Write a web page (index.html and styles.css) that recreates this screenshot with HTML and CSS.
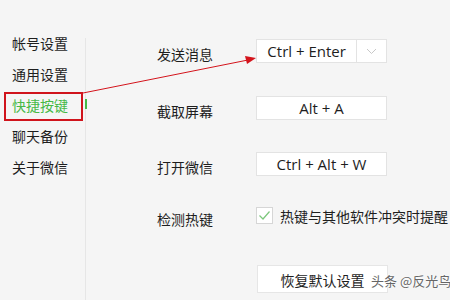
FILE: index.html
```html
<!DOCTYPE html>
<html lang="zh-CN">
<head>
<meta charset="utf-8">
<link rel="stylesheet" href="styles.css">
</head>
<body>
<div class="window">
  <nav class="sidebar">
    <div class="nav-item">帐号设置</div>
    <div class="nav-item">通用设置</div>
    <div class="nav-item active">快捷按键<span class="active-bar"></span></div>
    <div class="nav-item">聊天备份</div>
    <div class="nav-item">关于微信</div>
  </nav>
  <main class="content">
    <div class="row row-send">
      <div class="label">发送消息</div>
      <div class="keybox split">
        <span class="key-text">Ctrl + Enter</span>
        <span class="dropdown">
          <svg width="11" height="7" viewBox="0 0 11 7"><path d="M1 1 L5.5 5.5 L10 1" fill="none" stroke="#c8c8c8" stroke-width="1"/></svg>
        </span>
      </div>
    </div>
    <div class="row row-capture">
      <div class="label">截取屏幕</div>
      <div class="keybox"><span class="key-text">Alt + A</span></div>
    </div>
    <div class="row row-open">
      <div class="label">打开微信</div>
      <div class="keybox"><span class="key-text">Ctrl + Alt + W</span></div>
    </div>
    <div class="row row-check">
      <div class="label">检测热键</div>
      <label class="check">
        <span class="checkbox">
          <svg width="13" height="11" viewBox="0 0 13 11"><path d="M1.5 5.5 L5 9 L11.5 1.5" fill="none" stroke="#7cc77c" stroke-width="1.2"/></svg>
        </span>
        <span class="check-text">热键与其他软件冲突时提醒</span>
      </label>
    </div>
    <div class="row row-reset">
      <div class="label"></div>
      <button class="reset">恢复默认设置</button>
    </div>
  </main>
</div>
<div class="highlight-box"></div>
<svg class="arrow" width="450" height="300" viewBox="0 0 450 300">
  <line x1="83" y1="93" x2="248" y2="60" stroke="#d4141c" stroke-width="1"/>
  <polygon points="256,58 245,56 247,64" fill="#d4141c"/>
</svg>
<div class="watermark">头条 @反光鸟</div>
</body>
</html>
```
FILE: styles.css
```css
html, body {
  margin: 0;
  padding: 0;
}
body {
  width: 450px;
  height: 300px;
  background: #f5f5f5;
  font-family: "Noto Sans CJK SC", "Noto Sans", sans-serif;
  color: #1e1e1e;
  overflow: hidden;
  position: relative;
}
.window {
  display: flex;
  height: 300px;
}
.sidebar {
  width: 86px;
  padding-top: 28px;
  display: flex;
  flex-direction: column;
  position: relative;
}
.sidebar::after {
  content: "";
  position: absolute;
  right: 0;
  top: 38px;
  bottom: 0;
  width: 1px;
  background: #e6e6e6;
}
.nav-item {
  height: 31px;
  line-height: 31px;
  font-size: 14px;
  padding-left: 12px;
  position: relative;
}
.nav-item.active {
  color: #46b946;
}
.active-bar {
  position: absolute;
  right: -1px;
  top: 9px;
  width: 2px;
  height: 10px;
  background: #46b946;
  z-index: 1;
}
.content {
  flex: 1;
  padding-left: 71px;
  padding-top: 39px;
  display: flex;
  flex-direction: column;
}
.row {
  display: flex;
  align-items: center;
}
.row-capture { margin-top: 33px; }
.row-open { margin-top: 32px; }
.row-check { margin-top: 31px; }
.row-reset { margin-top: 41px; }
.label {
  width: 99px;
  font-size: 14px;
  line-height: 16px;
  padding-top: 3px;
  margin-bottom: -3px;
  color: #1e1e1e;
}
.keybox {
  width: 129px;
  height: 22px;
  background: #fff;
  border: 1px solid #e3e3e3;
  display: flex;
  align-items: center;
  justify-content: center;
  font-family: "Open Sans", "Noto Sans", sans-serif;
  font-size: 15px;
  color: #1e1e1e;
}
.keybox.split {
  justify-content: flex-start;
}
.split .key-text {
  width: 100px;
  text-align: center;
}
.dropdown {
  width: 29px;
  height: 22px;
  border-left: 1px solid #e3e3e3;
  display: flex;
  align-items: center;
  justify-content: center;
}
.check {
  display: flex;
  align-items: center;
  gap: 7px;
}
.checkbox {
  width: 15px;
  height: 15px;
  background: #fff;
  border: 1px solid #d6d6d6;
  display: flex;
  align-items: center;
  justify-content: center;
}
.check-text {
  font-size: 14px;
  line-height: 16px;
  padding-top: 1px;
  white-space: nowrap;
}
.reset {
  width: 131px;
  height: 28px;
  margin-left: 1px;
  background: #fff;
  border: 1px solid #e6e6e6;
  font-family: "Noto Sans CJK SC", sans-serif;
  font-size: 14px;
  line-height: 16px;
  color: #1e1e1e;
  padding: 2px 0 0;
}
.highlight-box {
  position: absolute;
  left: 4px;
  top: 92px;
  width: 75px;
  height: 25px;
  border: 2px solid #d0141c;
}
.arrow {
  position: absolute;
  left: 0;
  top: 0;
  pointer-events: none;
}
.watermark {
  position: absolute;
  left: 371px;
  top: 272px;
  font-size: 13px;
  line-height: 18px;
  color: #666;
  text-shadow: 0 0 2px #fff, 0 0 2px #fff;
  white-space: nowrap;
}
```
